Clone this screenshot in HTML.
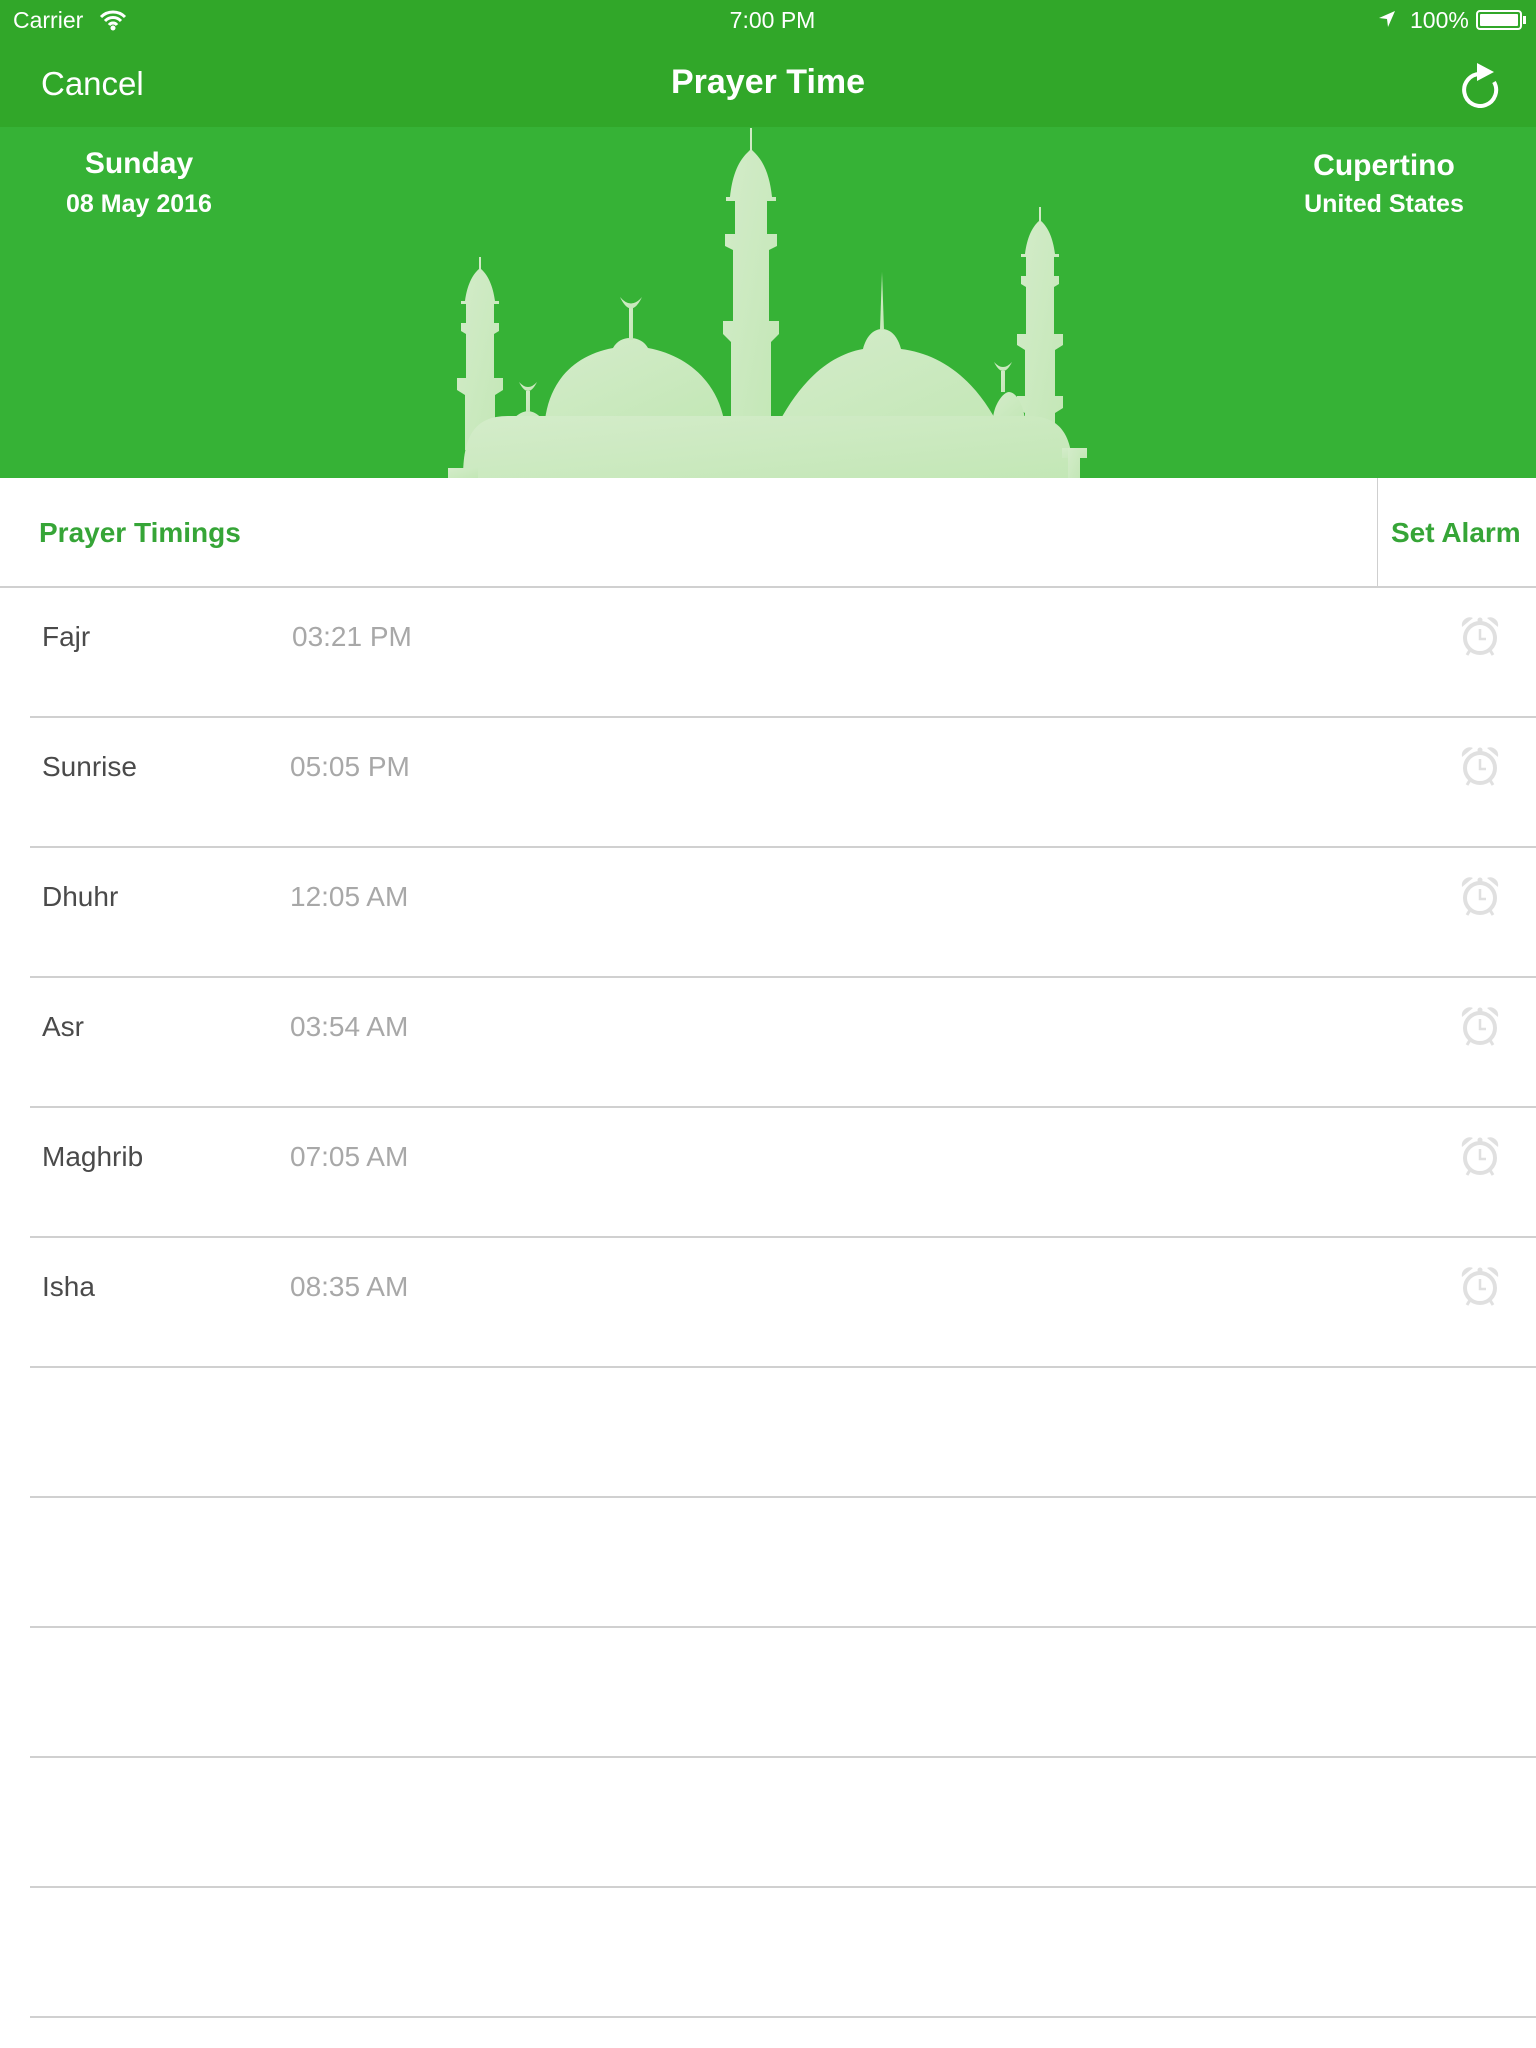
<!DOCTYPE html>
<html><head><meta charset="utf-8"><style>
*{margin:0;padding:0;box-sizing:border-box}
body{width:1536px;height:2048px;background:#fff;font-family:"Liberation Sans",Helvetica,Arial,sans-serif;position:relative;overflow:hidden}
.abs{position:absolute;white-space:nowrap}
#top{position:absolute;left:0;top:0;width:1536px;height:127px;background:#31a729}
#hdr{position:absolute;left:0;top:127px;width:1536px;height:351px;background:#36b236}
.w{color:#fff}
.line{position:absolute;left:30px;right:0;height:2px;background:#d0d0d0}
.name{position:absolute;left:42px;font-size:28px;color:#4a4a4a}
.time{position:absolute;left:290px;font-size:28px;color:#a8a8a8}
.al{position:absolute;left:1458px}
</style></head><body>
<div id="top"></div>
<div id="hdr"></div>
<div class="abs w" style="left:13px;top:7px;font-size:23px">Carrier</div>
<svg class="abs" style="left:99px;top:9px" width="28" height="22" viewBox="0 0 28 22"><path d="M2 8a17 17 0 0 1 24 0M6 12a11 11 0 0 1 16 0M10 16a5 5 0 0 1 8 0" stroke="#fff" stroke-width="3" fill="none"/><circle cx="14" cy="19" r="2.5" fill="#fff"/></svg>
<div class="abs w" style="left:0;width:1545px;text-align:center;top:7px;font-size:23px">7:00 PM</div>
<svg class="abs" style="left:1378px;top:10px" width="18" height="18" viewBox="0 0 18 18"><path d="M17 1L1 8l8 1 1 8z" fill="#fff"/></svg>
<div class="abs w" style="left:1410px;top:7px;font-size:23px">100%</div>
<div class="abs" style="left:1476px;top:10px;width:46px;height:20px;border:2px solid #fff;border-radius:4px;padding:2px"><div style="background:#fff;width:100%;height:100%;border-radius:1px"></div></div>
<div class="abs" style="left:1523px;top:16px;width:3px;height:8px;background:#fff"></div>
<div class="abs w" style="left:41px;top:65px;font-size:33px">Cancel</div>
<div class="abs w" style="left:0;width:1536px;text-align:center;top:63px;font-size:34px;font-weight:bold">Prayer Time</div>
<svg class="abs" style="left:1455px;top:58px" width="50" height="50" viewBox="1455 58 50 50"><path d="M1480 74A16 16 0 1 0 1494 82" stroke="#fff" stroke-width="4" fill="none"/><path d="M1477 63L1494 72 1477 81z" fill="#fff"/></svg>
<div class="abs w" style="left:0;width:278px;text-align:center;top:147px;font-size:30px;font-weight:bold">Sunday</div>
<div class="abs w" style="left:0;width:278px;text-align:center;top:190px;font-size:25px;font-weight:bold">08 May 2016</div>
<div class="abs w" style="left:1284px;width:200px;text-align:center;top:149px;font-size:30px;font-weight:bold">Cupertino</div>
<div class="abs w" style="left:1284px;width:200px;text-align:center;top:190px;font-size:25px;font-weight:bold">United States</div>
<svg class="abs" style="left:0;top:0" width="1536" height="480" viewBox="0 0 1536 480">
<defs><linearGradient id="g" x1="0" y1="0" x2="1" y2="1"><stop offset="0" stop-color="#d4ecca"/><stop offset="1" stop-color="#c3e7b6"/></linearGradient></defs>
<g fill="url(#g)">
<path d="M750 128 L752 128 L752 150 L755 153 C765 163 770 178 772 197 L776 197 L776 201 L767 201 L767 234 L777 234 L777 246 L769 250 L769 321 L779 321 L779 334 L771 342 L771 420 L731 420 L731 342 L723 334 L723 321 L733 321 L733 250 L725 246 L725 234 L735 234 L735 201 L726 201 L726 197 L730 197 C732 178 737 163 747 153 L750 150 Z"/>
<path d="M479 257 L481 257 L481 269 C488 275 493 286 495 301 L499 301 L499 304 L494 304 L494 323 L499 323 L499 331 L494 334 L494 378 L503 378 L503 390 L495 395 L495 450 L465 450 L465 395 L457 390 L457 378 L466 378 L466 334 L461 331 L461 323 L466 323 L466 304 L461 304 L461 301 L465 301 C467 286 472 275 479 269 Z"/>
<path d="M1039 207 L1041 207 L1041 221 C1048 227 1053 238 1055 254 L1059 254 L1059 257 L1054 257 L1054 276 L1059 276 L1059 284 L1054 287 L1054 334 L1063 334 L1063 345 L1055 350 L1055 396 L1063 396 L1063 408 L1055 413 L1055 450 L1025 450 L1025 413 L1017 408 L1017 396 L1025 396 L1025 350 L1017 345 L1017 334 L1026 334 L1026 287 L1021 284 L1021 276 L1026 276 L1026 257 L1021 257 L1021 254 L1025 254 C1027 238 1032 227 1039 221 Z"/>
<path d="M545 420c5-40 30-65 68-72 4-7 10-10 17-10s14 3 18 10c38 7 68 32 76 72z"/>
<rect x="629" y="306" width="4" height="34"/>
<path d="M620 297 Q631 320 642 297 Q631 310 620 297z"/>
<path d="M775 430c25-50 55-75 88-81 3-12 10-20 19-20s16 8 19 20c40 5 75 30 100 81z"/>
<path d="M880 330l2-58 2 58z"/>
<path d="M510 430c0-10 8-18 18-19 10 1 17 9 17 19z"/>
<rect x="526" y="391" width="4" height="21"/>
<path d="M519 382 Q528 400 537 382 Q528 392 519 382z"/>
<path d="M993 420c0-14 10-28 16-28s14 10 16 28z"/>
<rect x="1001" y="371" width="4" height="21"/>
<path d="M994 362 Q1003 380 1012 362 Q1003 372 994 362z"/>
<path d="M463 478c0-40 10-62 45-62h520c35 0 45 22 45 62z"/>
<rect x="448" y="468" width="30" height="10"/>
<rect x="1062" y="448" width="25" height="10"/>
<rect x="1068" y="448" width="12" height="30"/>
</g>
</svg>
<div class="abs" style="left:39px;top:517px;font-size:28px;font-weight:bold;color:#36a537">Prayer Timings</div>
<div class="abs" style="left:1391px;top:517px;font-size:28px;font-weight:bold;color:#36a537">Set Alarm</div>
<div class="abs" style="left:1377px;top:478px;width:1px;height:109px;background:#cfcfcf"></div>
<div class="abs" style="left:0;top:586px;width:1536px;height:2px;background:#d0d0d0"></div>

<div class="name" style="top:621px">Fajr</div><div class="time" style="top:621px;left:292px">03:21 PM</div>
<div class="name" style="top:751px">Sunrise</div><div class="time" style="top:751px">05:05 PM</div>
<div class="name" style="top:881px">Dhuhr</div><div class="time" style="top:881px">12:05 AM</div>
<div class="name" style="top:1011px">Asr</div><div class="time" style="top:1011px">03:54 AM</div>
<div class="name" style="top:1141px">Maghrib</div><div class="time" style="top:1141px">07:05 AM</div>
<div class="name" style="top:1271px">Isha</div><div class="time" style="top:1271px">08:35 AM</div>

<svg width="0" height="0" style="position:absolute"><defs><g id="alarm">
<path d="M4 13a8 8 0 0 1 11-9zM40 13a8 8 0 0 0-11-9z" fill="#e0e0e0"/>
<circle cx="22" cy="24" r="15" fill="none" stroke="#e0e0e0" stroke-width="4"/>
<path d="M22 15v10h6" fill="none" stroke="#e0e0e0" stroke-width="2.5"/>
<circle cx="22" cy="6" r="2.5" fill="#e0e0e0"/><rect x="21" y="6" width="2" height="4" fill="#e0e0e0"/>
<path d="M12 36l-3 5M32 36l3 5" stroke="#e0e0e0" stroke-width="3"/>
</g></defs></svg>
<svg class="al" style="top:614px" width="44" height="46"><use href="#alarm"/></svg>
<svg class="al" style="top:744px" width="44" height="46"><use href="#alarm"/></svg>
<svg class="al" style="top:874px" width="44" height="46"><use href="#alarm"/></svg>
<svg class="al" style="top:1004px" width="44" height="46"><use href="#alarm"/></svg>
<svg class="al" style="top:1134px" width="44" height="46"><use href="#alarm"/></svg>
<svg class="al" style="top:1264px" width="44" height="46"><use href="#alarm"/></svg>

<div class="line" style="top:716px"></div>
<div class="line" style="top:846px"></div>
<div class="line" style="top:976px"></div>
<div class="line" style="top:1106px"></div>
<div class="line" style="top:1236px"></div>
<div class="line" style="top:1366px"></div>
<div class="line" style="top:1496px"></div>
<div class="line" style="top:1626px"></div>
<div class="line" style="top:1756px"></div>
<div class="line" style="top:1886px"></div>
<div class="line" style="top:2016px"></div>
</body></html>
